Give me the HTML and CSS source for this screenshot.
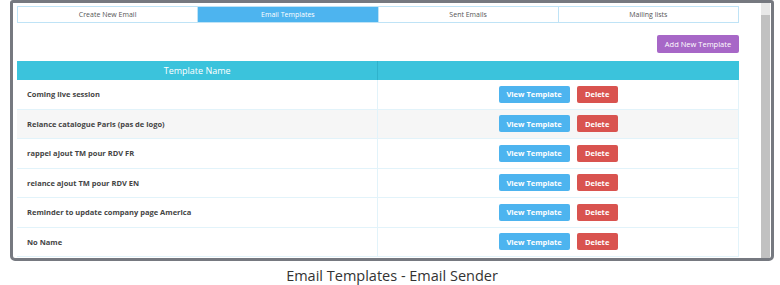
FILE: index.html
```html
<!DOCTYPE html>
<html lang="en">
<head>
  <meta charset="UTF-8">
  <title>Email Templates - Email Sender</title>
  <link rel="stylesheet" href="styles.css">
</head>
<body>
  <div class="shot">
    <div class="page">
      <ul class="tabs">
        <li>Create New Email</li>
        <li class="active">Email Templates</li>
        <li>Sent Emails</li>
        <li>Mailing lists</li>
      </ul>
      <div class="toolbar">
        <button class="btn btn-purple">Add New Template</button>
      </div>
      <table class="templates">
        <thead>
          <tr>
            <th>Template Name</th>
            <th></th>
          </tr>
        </thead>
        <tbody>
          <tr>
            <td>Coming live session</td>
            <td class="actions"><button class="btn btn-blue">View Template</button><button class="btn btn-red">Delete</button></td>
          </tr>
          <tr>
            <td>Relance catalogue Paris (pas de logo)</td>
            <td class="actions"><button class="btn btn-blue">View Template</button><button class="btn btn-red">Delete</button></td>
          </tr>
          <tr>
            <td>rappel ajout TM pour RDV FR</td>
            <td class="actions"><button class="btn btn-blue">View Template</button><button class="btn btn-red">Delete</button></td>
          </tr>
          <tr>
            <td>relance ajout TM pour RDV EN</td>
            <td class="actions"><button class="btn btn-blue">View Template</button><button class="btn btn-red">Delete</button></td>
          </tr>
          <tr>
            <td>Reminder to update company page America</td>
            <td class="actions"><button class="btn btn-blue">View Template</button><button class="btn btn-red">Delete</button></td>
          </tr>
          <tr>
            <td>No Name</td>
            <td class="actions"><button class="btn btn-blue">View Template</button><button class="btn btn-red">Delete</button></td>
          </tr>
        </tbody>
      </table>
    </div>
    <div class="scrollbar"><div class="thumb"></div></div>
  </div>
  <p class="caption">Email Templates - Email Sender</p>
</body>
</html>
```

FILE: styles.css
```css
body {
  margin: 0;
  background: #fff;
  font-family: "Open Sans", "Noto Sans", sans-serif;
}
.shot {
  display: flex;
  margin-left: 10px;
  width: 758px;
  height: 255px;
  border: 3px solid #767980;
  border-radius: 3px 3px 5px 5px;
  overflow: hidden;
  background: #fff;
}
.page {
  flex: 1;
  padding: 3px 22px 0 4px;
  overflow: hidden;
}
.scrollbar {
  width: 9px;
  margin-right: 1px;
  background: #e8e8e8;
  padding-top: 12px;
}
.thumb {
  height: 100%;
  background: #c1c1c1;
}
.tabs {
  display: flex;
  margin: 0;
  padding: 0;
  list-style: none;
  border: 1px solid #bfe3f6;
}
.tabs li {
  flex: 1;
  height: 15px;
  line-height: 15px;
  text-align: center;
  font-size: 7px;
  color: #555;
  border-left: 1px solid #bfe3f6;
}
.tabs li:first-child {
  border-left: none;
}
.tabs li.active {
  background: #4db4ef;
  color: #fff;
}
.toolbar {
  display: flex;
  justify-content: flex-end;
  padding: 12px 0 8px;
}
.btn {
  border: none;
  border-radius: 2px;
  color: #fff;
  font-family: "Open Sans", "Noto Sans", sans-serif;
  cursor: pointer;
}
.btn-purple {
  width: 82px;
  height: 18px;
  padding: 0;
  font-size: 7.5px;
  background: #a767c7;
}
.btn-blue {
  background: #4db4ef;
}
.btn-red {
  background: #d9534f;
}
.templates {
  width: 100%;
  border-collapse: collapse;
  table-layout: fixed;
}
.templates th {
  height: 19px;
  padding: 0;
  background: #3bc3dc;
  color: #fff;
  font-size: 9px;
  font-weight: normal;
  border-right: 1px solid #2fb2cc;
}
.templates th:last-child {
  border-right: none;
}
.templates td {
  height: 28.5px;
  padding: 0 0 0 10px;
  font-size: 7.5px;
  font-weight: bold;
  color: #444;
  border-bottom: 1px solid #e2f3fa;
  border-right: 1px solid #e2f3fa;
}
.templates tbody tr:nth-child(2) td {
  background: #f6f6f6;
}
.templates td.actions {
  padding: 0;
  text-align: center;
}
.actions .btn {
  height: 17px;
  font-size: 7.5px;
  font-weight: bold;
  vertical-align: middle;
}
.actions .btn-blue {
  width: 71px;
  margin-right: 7px;
}
.actions .btn-red {
  width: 41px;
}
.caption {
  margin: 6px 0 0;
  line-height: 18px;
  text-align: center;
  padding-left: 4px;
  font-size: 14.5px;
  color: #333;
}
```
